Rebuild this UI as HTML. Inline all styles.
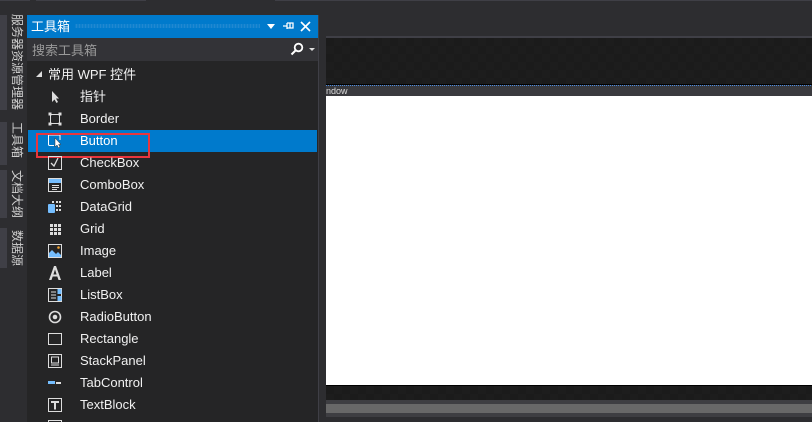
<!DOCTYPE html>
<html><head><meta charset="utf-8"><style>
*{margin:0;padding:0;box-sizing:border-box}
body{width:812px;height:422px;overflow:hidden;background:#2d2d30;position:relative;font-family:"Liberation Sans","Noto Sans CJK SC",sans-serif;color:#f1f1f1}
.a{position:absolute}
.vt{position:absolute;left:9px;writing-mode:vertical-rl;text-orientation:sideways;font-size:12px;color:#d0d0d0;line-height:16px;letter-spacing:0}
.tb{position:absolute;left:0;width:7px;background:#3f3f46}
.row{position:absolute;left:28px;width:289px;height:22px;font-size:13px;line-height:22px}
.row span{position:absolute;left:52px}
.ic{position:absolute;left:20px;top:4px;width:14px;height:14px}
.chk{background-image:linear-gradient(45deg,#1d1d1d 25%,transparent 25%,transparent 75%,#1d1d1d 75%),linear-gradient(45deg,#1d1d1d 25%,transparent 25%,transparent 75%,#1d1d1d 75%);background-size:16px 16px;background-position:0 0,8px 8px;background-color:#1b1b1b}
</style></head><body>
<div class="a" style="left:0;top:0;width:30px;height:1px;background:#3f3f46"></div>
<div class="a" style="left:36px;top:0;width:110px;height:1px;background:#3f3f46"></div>
<div class="a" style="left:275px;top:0;width:537px;height:1px;background:#3f3f46"></div>
<div class="tb" style="top:15px;height:95px"></div>
<div class="tb" style="top:122px;height:43px"></div>
<div class="tb" style="top:170px;height:48px"></div>
<div class="tb" style="top:228px;height:40px"></div>
<div class="vt" style="top:14px">服务器资源管理器</div>
<div class="vt" style="top:122px">工具箱</div>
<div class="vt" style="top:170px">文档大纲</div>
<div class="vt" style="top:230px">数据源</div>

<div class="a" style="left:27px;top:15px;width:292px;height:407px;background:#252526"></div>
<div class="a" style="left:318px;top:15px;width:1px;height:407px;background:#3f3f46"></div>
<div class="a" style="left:27px;top:15px;width:291px;height:23px;background:#007acc"></div>
<div class="a" style="left:31px;top:18px;font-size:13px;line-height:17px;color:#fff">工具箱</div>
<div class="a" style="left:75px;top:24px;width:185px;height:4px;background-image:radial-gradient(#3f97d6 0.8px,transparent 1px);background-size:3px 2px"></div>
<div class="a" style="left:267px;top:24px;width:0;height:0;border-left:4px solid transparent;border-right:4px solid transparent;border-top:5px solid #fff"></div>
<svg class="a" style="left:282px;top:20px" width="14" height="12"><path d="M1 6H5M5 3V9M5 3H11V8H5M8 3V8" stroke="#fff" stroke-width="1.3" fill="none"/></svg>
<svg class="a" style="left:300px;top:21px" width="11" height="11"><path d="M1 1L10 10M10 1L1 10" stroke="#fff" stroke-width="1.6"/></svg>
<div class="a" style="left:27px;top:38px;width:291px;height:23px;background:#333337"></div>
<div class="a" style="left:32px;top:42px;font-size:13px;line-height:17px;color:#999">搜索工具箱</div>
<svg class="a" style="left:290px;top:42px" width="14" height="14"><circle cx="8.5" cy="5.5" r="3.8" stroke="#fff" stroke-width="1.8" fill="none"/><path d="M6 8L1.5 12.5" stroke="#fff" stroke-width="2"/></svg>
<div class="a" style="left:309px;top:48px;border-left:3px solid transparent;border-right:3px solid transparent;border-top:3px solid #ddd"></div>

<div class="a" style="left:36px;top:71px;border-left:6px solid transparent;border-bottom:6px solid #ddd"></div>
<div class="a" style="left:48px;top:65px;font-size:13px;line-height:20px">常用 WPF 控件</div>

<div class="row" style="top:86px"><svg class="ic" viewBox="0 0 14 14"><path d="M4 1V12L6.5 9.5L8.5 13L10 12L8 8.5H11Z" fill="#ddd"/></svg><span>指针</span></div>
<div class="row" style="top:108px"><svg class="ic" viewBox="0 0 14 14"><rect x="2.5" y="2.5" width="9" height="9" stroke="#ddd" fill="none"/><rect x="0.5" y="0.5" width="3" height="3" fill="#ddd"/><rect x="10.5" y="0.5" width="3" height="3" fill="#ddd"/><rect x="0.5" y="10.5" width="3" height="3" fill="#ddd"/><rect x="10.5" y="10.5" width="3" height="3" fill="#ddd"/></svg><span>Border</span></div>
<div class="row" style="top:130px;background:#007acc;height:22px;color:#fff"><svg class="ic" viewBox="0 0 14 14"><path d="M0.5 1V10.5Q0.5 11.5 2 11.5H6M0.5 1H12V6" stroke="#fff" fill="none"/><path d="M7 4V13L9 11L10.5 14L12 13L10.5 10.5H13Z" fill="#fff" stroke="#333" stroke-width="0.5"/></svg><span>Button</span></div>
<div class="a" style="left:36px;top:133px;width:114px;height:25px;border:2px solid #e8363d"></div>
<div class="row" style="top:152px"><svg class="ic" viewBox="0 0 14 14"><rect x="0.5" y="0.5" width="13" height="13" stroke="#ddd" fill="none"/><path d="M3 7L6 10L10 2" stroke="#ddd" stroke-width="1.3" fill="none"/></svg><span>CheckBox</span></div>
<div class="row" style="top:174px"><svg class="ic" viewBox="0 0 14 14"><rect x="0.5" y="0.5" width="13" height="13" stroke="#ddd" fill="none"/><rect x="1" y="1" width="12" height="4" fill="#75beff"/><path d="M4 7.5H11M4 9.5H11M4 11.5H9" stroke="#ddd"/></svg><span>ComboBox</span></div>
<div class="row" style="top:196px"><svg class="ic" viewBox="0 0 14 14"><rect x="0" y="4" width="7" height="9" rx="1" fill="#75beff"/><path d="M8 1h2v2H8zM11 1h2v2h-2zM8 5h2v2H8zM11 5h2v2h-2zM8 9h2v2H8zM11 9h2v2h-2zM4 1h2v2H4z" fill="#ddd"/></svg><span>DataGrid</span></div>
<div class="row" style="top:218px"><svg class="ic" viewBox="0 0 14 14"><path d="M2 2h3v3H2zM6 2h3v3H6zM10 2h3v3h-3zM2 6h3v3H2zM6 6h3v3H6zM10 6h3v3h-3zM2 10h3v3H2zM6 10h3v3H6zM10 10h3v3h-3z" fill="#ddd"/></svg><span>Grid</span></div>
<div class="row" style="top:240px"><svg class="ic" viewBox="0 0 14 14"><rect x="0.5" y="0.5" width="13" height="13" stroke="#ddd" fill="none"/><path d="M1 13V9L4 6L8 10L10 8L13 11V13Z" fill="#75beff"/><circle cx="10.5" cy="3.5" r="1.3" fill="#f0a030"/></svg><span>Image</span></div>
<div class="row" style="top:262px"><svg class="ic" viewBox="0 0 14 14"><path d="M1 14L6 0H8L13 14H10.5L9.3 10.5H4.7L3.5 14ZM5.4 8.5H8.6L7 3.5Z" fill="#ddd"/></svg><span>Label</span></div>
<div class="row" style="top:284px"><svg class="ic" viewBox="0 0 14 14"><rect x="0.5" y="0.5" width="13" height="13" stroke="#ddd" fill="none"/><path d="M3 4H8M3 7H8M3 10H8" stroke="#ddd"/><rect x="9.5" y="1" width="4" height="5" fill="#75beff"/><rect x="9.5" y="8" width="4" height="5" fill="#75beff"/></svg><span>ListBox</span></div>
<div class="row" style="top:306px"><svg class="ic" viewBox="0 0 14 14"><circle cx="7" cy="7" r="5.5" stroke="#ddd" stroke-width="1.6" fill="none"/><circle cx="7" cy="7" r="2.3" fill="#ddd"/></svg><span>RadioButton</span></div>
<div class="row" style="top:328px"><svg class="ic" viewBox="0 0 14 14"><rect x="0.5" y="1.5" width="13" height="11" stroke="#ddd" fill="none"/></svg><span>Rectangle</span></div>
<div class="row" style="top:350px"><svg class="ic" viewBox="0 0 14 14"><rect x="0.5" y="0.5" width="13" height="13" stroke="#ddd" fill="none"/><path d="M3.5 3V9H10.5V3ZM3 11H11" stroke="#ddd" fill="none"/></svg><span>StackPanel</span></div>
<div class="row" style="top:372px"><svg class="ic" viewBox="0 0 14 14"><rect x="0" y="5" width="7" height="3" fill="#75beff"/><rect x="8" y="6" width="5" height="2" fill="#ddd"/></svg><span>TabControl</span></div>
<div class="row" style="top:394px"><svg class="ic" viewBox="0 0 14 14"><rect x="0.5" y="0.5" width="13" height="13" stroke="#ddd" fill="none"/><path d="M3 3H11V5H8V11.5H6V5H3Z" fill="#ddd"/></svg><span>TextBlock</span></div>
<div class="a" style="left:48px;top:420px;width:14px;height:2px;border:1px solid #ddd;border-bottom:none"></div>

<div class="a" style="left:319px;top:15px;width:7px;height:407px;background:#2d2d30"></div>
<div class="a" style="left:326px;top:36px;width:486px;height:2px;background:#3f3f46"></div>
<div class="a chk" style="left:326px;top:38px;width:486px;height:46px"></div>
<div class="a" style="left:326px;top:84px;width:486px;height:1px;background:#000"></div>
<div class="a" style="left:326px;top:85px;width:486px;height:11px;background:#3a3a3e"></div>
<div class="a" style="left:326px;top:85px;width:486px;height:2px;background-image:linear-gradient(90deg,#4a8be0 50%,transparent 50%);background-size:2px 1px;background-repeat:repeat-x"></div>
<div class="a" style="left:326px;top:86px;font-size:9px;line-height:10px;color:#ddd">ndow</div>
<div class="a" style="left:326px;top:96px;width:486px;height:289px;background:#fff"></div>
<div class="a" style="left:326px;top:385px;width:486px;height:1px;background:#000"></div>
<div class="a chk" style="left:326px;top:386px;width:486px;height:14px"></div>
<div class="a" style="left:326px;top:400px;width:486px;height:17px;background:#3e3e42"></div>
<div class="a" style="left:326px;top:404px;width:486px;height:9px;background:#686868"></div>
</body></html>
